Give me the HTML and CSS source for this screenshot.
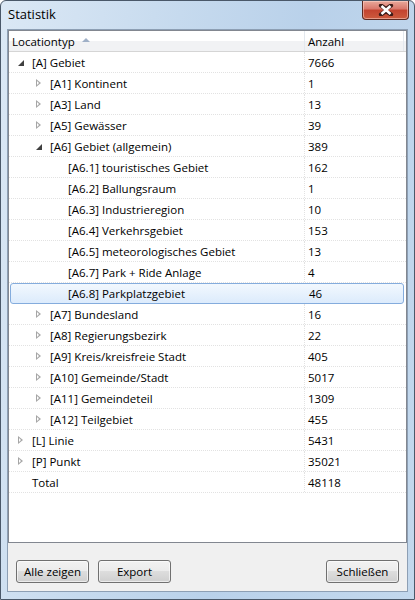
FILE: index.html
```html
<!DOCTYPE html>
<html>
<head>
<meta charset="utf-8">
<link rel="stylesheet" href="styles.css">
</head>
<body>
<div class="window">
  <div class="titlebar">
    <span class="title">Statistik</span>
    <div class="close">
      <svg width="16" height="12" viewBox="0 0 16 12"><path d="M3 1.5 L8 5 L13 1.5 M3 10.5 L8 7 L13 10.5" stroke="#3b1a16" stroke-width="4.2" fill="none" stroke-linecap="round"/><path d="M3.5 2 L12.5 10 M12.5 2 L3.5 10" stroke="#fff" stroke-width="2.6" fill="none"/></svg>
    </div>
  </div>
  <div class="client">
    <div class="list">
      <div class="header">
        <div class="hcell name">Locationtyp <span class="sort"></span></div>
        <div class="hcell count">Anzahl</div>
        <div class="hfill"></div>
      </div>
      <div class="rows">
        <div class="row"><div class="cell name l0"><span class="exp open"></span>[A] Gebiet</div><div class="cell count">7666</div></div>
        <div class="row"><div class="cell name l1"><span class="exp closed"></span>[A1] Kontinent</div><div class="cell count">1</div></div>
        <div class="row"><div class="cell name l1"><span class="exp closed"></span>[A3] Land</div><div class="cell count">13</div></div>
        <div class="row"><div class="cell name l1"><span class="exp closed"></span>[A5] Gewässer</div><div class="cell count">39</div></div>
        <div class="row"><div class="cell name l1"><span class="exp open"></span>[A6] Gebiet (allgemein)</div><div class="cell count">389</div></div>
        <div class="row"><div class="cell name l2"><span class="exp"></span>[A6.1] touristisches Gebiet</div><div class="cell count">162</div></div>
        <div class="row"><div class="cell name l2"><span class="exp"></span>[A6.2] Ballungsraum</div><div class="cell count">1</div></div>
        <div class="row"><div class="cell name l2"><span class="exp"></span>[A6.3] Industrieregion</div><div class="cell count">10</div></div>
        <div class="row"><div class="cell name l2"><span class="exp"></span>[A6.4] Verkehrsgebiet</div><div class="cell count">153</div></div>
        <div class="row"><div class="cell name l2"><span class="exp"></span>[A6.5] meteorologisches Gebiet</div><div class="cell count">13</div></div>
        <div class="row"><div class="cell name l2"><span class="exp"></span>[A6.7] Park + Ride Anlage</div><div class="cell count">4</div></div>
        <div class="row selected"><div class="cell name l2"><span class="exp"></span>[A6.8] Parkplatzgebiet</div><div class="cell count">46</div></div>
        <div class="row"><div class="cell name l1"><span class="exp closed"></span>[A7] Bundesland</div><div class="cell count">16</div></div>
        <div class="row"><div class="cell name l1"><span class="exp closed"></span>[A8] Regierungsbezirk</div><div class="cell count">22</div></div>
        <div class="row"><div class="cell name l1"><span class="exp closed"></span>[A9] Kreis/kreisfreie Stadt</div><div class="cell count">405</div></div>
        <div class="row"><div class="cell name l1"><span class="exp closed"></span>[A10] Gemeinde/Stadt</div><div class="cell count">5017</div></div>
        <div class="row"><div class="cell name l1"><span class="exp closed"></span>[A11] Gemeindeteil</div><div class="cell count">1309</div></div>
        <div class="row"><div class="cell name l1"><span class="exp closed"></span>[A12] Teilgebiet</div><div class="cell count">455</div></div>
        <div class="row"><div class="cell name l0"><span class="exp closed"></span>[L] Linie</div><div class="cell count">5431</div></div>
        <div class="row"><div class="cell name l0"><span class="exp closed"></span>[P] Punkt</div><div class="cell count">35021</div></div>
        <div class="row"><div class="cell name l0"><span class="exp"></span>Total</div><div class="cell count">48118</div></div>
      </div>
    </div>
    <div class="buttons">
      <button class="btn">Alle zeigen</button>
      <button class="btn">Export</button>
      <span class="spacer"></span>
      <button class="btn">Schließen</button>
    </div>
  </div>
</div>
</body>
</html>
```
FILE: styles.css
```css
html, body {
  margin: 0;
  padding: 0;
  background: #ffffff;
}
body {
  font-family: "Open Sans", "Noto Sans", sans-serif;
  font-size: 11.5px;
  color: #000;
}
.window {
  box-sizing: border-box;
  width: 415px;
  height: 600px;
  border: 1px solid #4a5869;
  border-radius: 6px 6px 0 0;
  background: linear-gradient(100deg, #dbe8f5 0%, #c6daee 35%, #b9d1ea 60%, #c3d8ed 100%);
  padding: 0 6px 7px 6px;
  display: flex;
  flex-direction: column;
}
.titlebar {
  height: 28px;
  display: flex;
  align-items: flex-start;
  justify-content: space-between;
  flex: none;
}
.title {
  margin: 4px 0 0 1px;
  font-size: 13px;
  color: #000;
}
.close {
  width: 45px;
  height: 18px;
  margin-right: -1px;
  border: 1px solid #5c2a22;
  border-top: none;
  border-radius: 0 0 4px 4px;
  background: linear-gradient(#e9a99b 0%, #d9766a 45%, #c3432f 50%, #cc5b3e 100%);
  box-shadow: inset 0 0 0 1px rgba(255,220,210,0.5);
  display: flex;
  align-items: center;
  justify-content: center;
}
.client {
  flex: 1;
  background: #f0f0f0;
  border: 1px solid #8d9fb4;
  display: flex;
  flex-direction: column;
  min-height: 0;
}
.list {
  height: 513px;
  box-sizing: border-box;
  border: 1px solid #828790;
  background: #fff;
  display: flex;
  flex-direction: column;
}
.header {
  height: 20px;
  display: flex;
  background: linear-gradient(#ffffff 0%, #ffffff 50%, #f1f2f4 51%, #f1f2f4 100%);
  border-bottom: 1px solid #d5d5d5;
  flex: none;
}
.hcell {
  box-sizing: border-box;
  display: flex;
  align-items: center;
}
.hcell.name {
  width: 296px;
  padding-left: 3px;
  border-right: 1px solid #e3e8ee;
}
.hcell.count {
  width: 99px;
  padding-left: 3px;
  border-right: 1px solid #e3e8ee;
}
.hfill {
  flex: 1;
}
.sort {
  display: inline-block;
  width: 0;
  height: 0;
  margin-left: 7px;
  margin-top: -2px;
  border-left: 4px solid transparent;
  border-right: 4px solid transparent;
  border-bottom: 4px solid #9fb0c7;
}
.rows {
  display: flex;
  flex-direction: column;
}
.row {
  height: 21px;
  box-sizing: border-box;
  display: flex;
  border-bottom: 1px dotted #e2e2e2;
}
.cell {
  box-sizing: border-box;
  display: flex;
  align-items: center;
  white-space: nowrap;
}
.cell.name {
  width: 296px;
  padding-left: 3px;
  border-right: 1px dotted #e2e2e2;
}
.cell.count {
  flex: 1;
  padding-left: 3px;
}
.l1 { padding-left: 21px !important; }
.l2 { padding-left: 39px !important; }
.exp {
  width: 17px;
  height: 21px;
  margin-right: 3px;
  flex: none;
  position: relative;
}
.exp.closed::before {
  content: "";
  position: absolute;
  left: 6px;
  top: 6px;
  width: 0;
  height: 0;
  border-top: 4.5px solid transparent;
  border-bottom: 4.5px solid transparent;
  border-left: 5px solid #a6a6a6;
  border-right: none;
}
.exp.closed::after {
  content: "";
  position: absolute;
  left: 7px;
  top: 8.5px;
  width: 0;
  height: 0;
  border-top: 2px solid transparent;
  border-bottom: 2px solid transparent;
  border-left: 2.5px solid #fff;
}
.exp.open::before {
  content: "";
  position: absolute;
  left: 6px;
  top: 8px;
  width: 0;
  height: 0;
  border-left: 6px solid transparent;
  border-bottom: 6px solid #404040;
}
.row.selected {
  margin: 0 2px 0 1px;
  border: 1px solid #84acdd;
  border-radius: 3px;
  background: linear-gradient(#f2f8fe 0%, #dcebfc 100%);
}
.row.selected .cell.name {
  width: 295px;
  padding-left: 37px !important;
  border-right-color: transparent;
}
.buttons {
  display: flex;
  align-items: center;
  padding: 17px 8px 0 8px;
  gap: 9px;
}
.spacer { flex: 1; }
.btn {
  width: 73px;
  height: 23px;
  box-sizing: border-box;
  border: 1px solid #707070;
  border-radius: 3px;
  background: linear-gradient(#f2f2f2 0%, #ebebeb 49%, #dddddd 50%, #cfcfcf 100%);
  box-shadow: inset 0 0 0 1px rgba(255,255,255,0.6);
  font-family: "Open Sans", "Noto Sans", sans-serif;
  font-size: 11.5px;
  color: #000;
  padding: 0;
}
```
